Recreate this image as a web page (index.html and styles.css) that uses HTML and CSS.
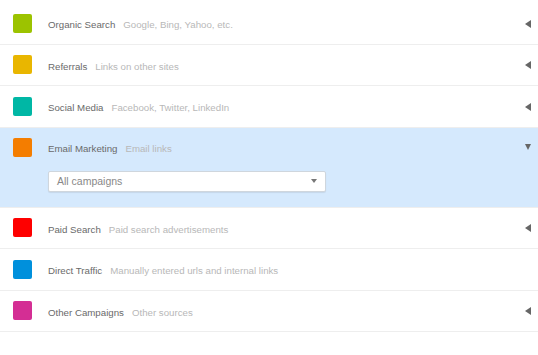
FILE: index.html
```html
<!DOCTYPE html>
<html lang="en">
<head>
  <meta charset="UTF-8">
  <title>Traffic Sources</title>
  <link rel="stylesheet" href="styles.css">
</head>
<body>
  <ul class="sources">
    <li class="source">
      <div class="source-head">
        <span class="swatch green"></span>
        <span class="name">Organic Search</span>
        <span class="desc">Google, Bing, Yahoo, etc.</span>
        <span class="arrow"></span>
      </div>
    </li>
    <li class="source">
      <div class="source-head">
        <span class="swatch yellow"></span>
        <span class="name">Referrals</span>
        <span class="desc">Links on other sites</span>
        <span class="arrow"></span>
      </div>
    </li>
    <li class="source">
      <div class="source-head">
        <span class="swatch teal"></span>
        <span class="name">Social Media</span>
        <span class="desc">Facebook, Twitter, LinkedIn</span>
        <span class="arrow"></span>
      </div>
    </li>
    <li class="source open">
      <div class="source-head">
        <span class="swatch orange"></span>
        <span class="name">Email Marketing</span>
        <span class="desc">Email links</span>
        <span class="arrow"></span>
      </div>
      <div class="select">
        <span>All campaigns</span>
        <span class="caret"></span>
      </div>
    </li>
    <li class="source">
      <div class="source-head">
        <span class="swatch red"></span>
        <span class="name">Paid Search</span>
        <span class="desc">Paid search advertisements</span>
        <span class="arrow"></span>
      </div>
    </li>
    <li class="source">
      <div class="source-head">
        <span class="swatch blue"></span>
        <span class="name">Direct Traffic</span>
        <span class="desc">Manually entered urls and internal links</span>
      </div>
    </li>
    <li class="source">
      <div class="source-head">
        <span class="swatch pink"></span>
        <span class="name">Other Campaigns</span>
        <span class="desc">Other sources</span>
        <span class="arrow"></span>
      </div>
    </li>
  </ul>
</body>
</html>
```

FILE: styles.css
```css
body {
  margin: 0;
  font-family: "Liberation Sans", Arial, sans-serif;
  background-color: #fff;
}

.sources {
  list-style: none;
  margin: 0;
  padding: 3px 0 0 0;
}

.source {
  border-bottom: 1px solid #eeeeee;
}

.source-head {
  display: flex;
  align-items: center;
  height: 40.5px;
  padding: 0 7px 0 13px;
  font-size: 9.7px;
}

.swatch {
  width: 19px;
  height: 19px;
  border-radius: 2px;
  margin-right: 16px;
  flex-shrink: 0;
}

.green { background-color: #9cc300; }
.yellow { background-color: #e9b600; }
.teal { background-color: #00b7a5; }
.orange { background-color: #f47d00; }
.red { background-color: #fe0000; }
.blue { background-color: #0090dc; }
.pink { background-color: #d42e94; }

.name,
.desc {
  padding-top: 3px;
}

.name {
  color: #6a6a6a;
  margin-right: 8px;
}

.desc {
  color: #b8b8b8;
}

.arrow {
  margin-left: auto;
  margin-top: 1px;
  width: 0;
  height: 0;
  border-top: 4px solid transparent;
  border-bottom: 4px solid transparent;
  border-right: 6px solid #666;
}

/* opened row */
.source.open {
  background-color: #d5e9fd;
  padding-bottom: 15px;
}

.source.open .source-head {
  height: 39px;
}

.source.open .arrow {
  border-top: 6px solid #666;
  border-bottom: 0;
  border-left: 3.5px solid transparent;
  border-right: 3.5px solid transparent;
  margin-top: -1px;
}

.select {
  display: flex;
  align-items: center;
  justify-content: space-between;
  box-sizing: border-box;
  width: 278px;
  height: 21px;
  margin: 4px 0 0 48px;
  padding: 0 8px;
  background-color: #fff;
  border: 1px solid #cfd6dd;
  border-radius: 2px;
  box-shadow: 0 1px 1px rgba(0, 0, 0, 0.08);
  font-size: 10.5px;
  color: #888;
}

.caret {
  width: 0;
  height: 0;
  border-top: 4px solid #777;
  border-left: 3.5px solid transparent;
  border-right: 3.5px solid transparent;
}
```
